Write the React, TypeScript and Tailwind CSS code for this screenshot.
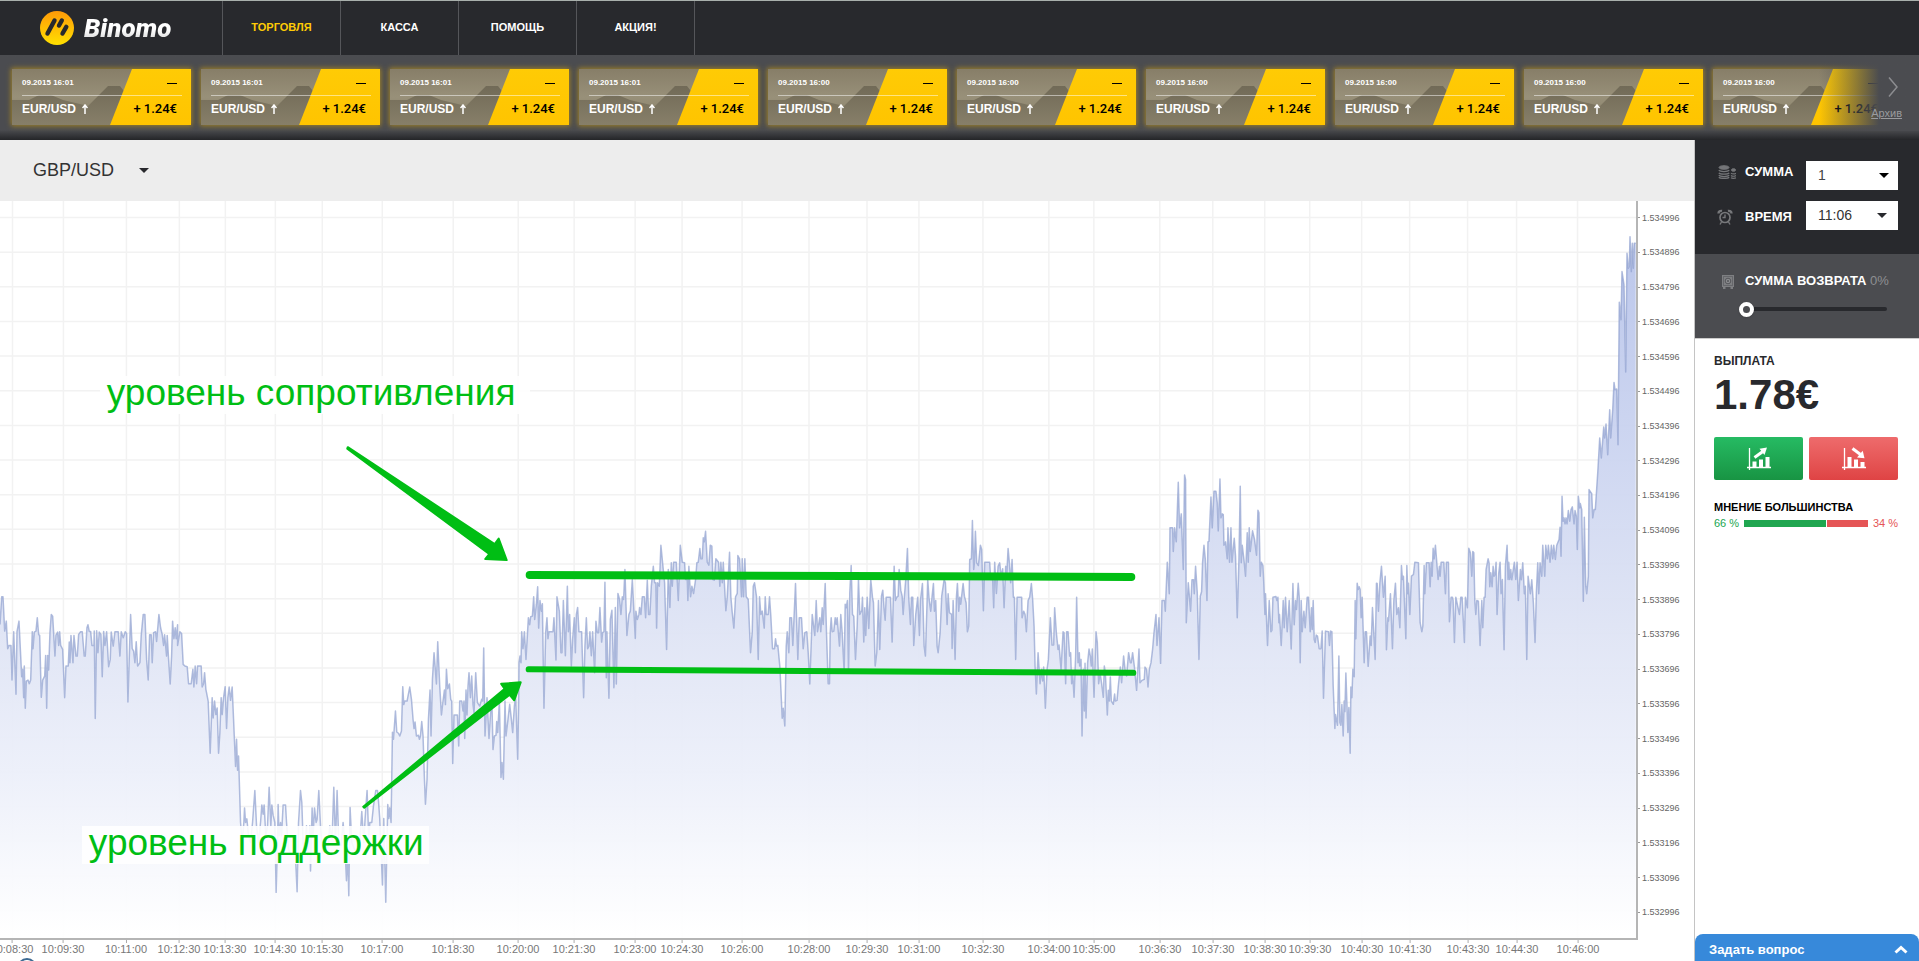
import { useState } from "react";
import type { ReactNode } from "react";

type Chunk = {
  left: number;
  top: number;
  points: string;
};

const PLOT_WIDTH = 1637;
const PLOT_HEIGHT = 738;

// quotes history, three samples per plot unit
const chunks: Chunk[] = [
  {
    left: 0,
    top: 359,
    points:
      "0,195 5,112 9,112 14,215 19,185 23,268 27,258 33,258 36,362 41,217 48,405 51,217 57,185 65,352 68,330 71,415 73,320 76,447 79,365 84,362 88,373 92,362 97,217 99,268 103,218 108,215 112,175 116,226 119,228 124,414 128,362 134,350 137,288 140,447 143,288 146,332 150,218 154,165 158,170 165,290 168,227 173,218 176,258 179,217 182,258 188,270 194,415 198,320 205,320 208,248 210,310 213,228 219,310 222,228 228,290 232,290 236,225 242,217 247,217 253,290 256,290 261,205 264,196 268,216 272,216 276,258 282,258 283,215 286,478 290,214 294,280 298,218 303,225 307,352 311,216 315,258 320,217 326,322 331,300 334,218 340,260 345,217 355,217 360,290 364,217 370,235 376,217 380,222 384,428 388,300 392,165 397,268 401,275 405,310 409,247 413,320 420,310 424,228 430,165 435,165 440,300 445,362 449,226 454,226 457,310 461,220 467,217 470,246 477,165 482,205 487,225 491,258 494,226 500,290 502,228 506,300 511,374 515,290 518,185 522,238 526,205 529,238 533,196 533,258 540,217 545,222 550,315 555,320 562,322 566,373 574,373 579,330 582,383 586,320 590,373 593,320 604,320 607,383 611,373 614,340 618,390 625,425 631,582 637,415 640,476 644,425 648,466 652,446 656,582 660,520 664,415 667,466 671,415 676,382 680,508 684,415 688,383 692,423 697,383 701,480 707,622 710,540 713,633 716,590 719,690 722,790 727,850 732,790 734,746 737,790 741,779 746,830 752,850 758,790 765,694 770,800 776,850 782,790 786,737 790,765 793,737 798,830 803,800 808,684 813,800 816,737 820,768 825,790 829,1000 833,850 835,736 838,830 842,790 845,830 850,737 857,737 860,790 866,870 874,885 880,880 886,870 892,998 896,790 902,694 906,730 910,850 914,880 920,800 924,890 930,800 932,936 937,746 940,830 944,746 949,790 952,780 957,694 962,800 968,880 976,840 984,870 990,800 997,840 1002,684 1007,850 1012,694 1017,850 1024,860 1030,790 1035,850 1040,965 1044,880 1047,1010 1051,745 1056,850 1064,870 1074,880 1080,850 1086,757 1092,850 1096,780 1102,694 1107,840 1110,790 1116,790 1121,740 1128,694 1133,694 1136,725 1140,780 1148,978 1152,778 1158,1030 1164,736 1167,778 1170,746 1174,790 1178,519 1181,540 1187,455 1191,518 1196,522 1200,530 1205,515 1209,382 1212,436 1215,425 1222,425 1230,383 1235,420 1240,480 1243,508 1246,488 1250,530 1256,528 1259,540",
  },
  {
    left: 400,
    top: 319,
    points:
      "62,650 66,607 70,650 74,780 77,855 82,780 86,600 91,512 94,650 98,480 103,400 107,455 110,494 114,367 120,500 125,587 130,545 134,512 137,556 140,450 144,508 149,494 153,540 156,545 159,733 163,587 173,587 177,680 180,545 186,545 190,575 193,545 195,658 199,512 202,587 205,500 208,460 212,535 216,470 220,555 223,580 228,460 233,550 240,560 246,540 249,545 252,386 256,650 262,535 268,658 274,560 277,560 280,691 284,650 289,648 291,607 294,640 299,545 304,775 307,730 311,780 316,545 319,650 325,600 330,555 335,600 339,640 344,560 348,530 354,720 357,545 358,430 361,410 364,430 366,337 370,388 374,337 379,420 386,295 390,316 393,292 398,290 402,232 405,300 410,255 414,202 417,326 421,243 425,275 428,253 433,567 438,340 442,295 445,358 448,337 460,337 463,295 469,422 472,232 479,275 484,400 487,400 491,243 497,409 503,200 506,337 510,285 515,440 519,358 524,295 527,400 530,285 534,264 538,337 546,337 552,535 556,380 560,295 564,388 568,380 571,337 575,409 579,337 585,460 589,305 593,340 597,340 601,264 606,368 609,340 613,337 616,188 620,475 622,337 628,537 632,300 637,272 643,505 647,264 650,494 655,222 660,240 664,285 668,232 672,240 676,150 682,348 688,285 692,275 698,180 703,275 707,357 709,275 713,300 718,285 720,264 724,285 728,232 734,232 738,295 743,182 747,285 751,285 755,200 761,140 765,190 769,190 771,326 774,190 779,200 784,77 789,130 795,190 801,390 806,150 811,264 815,130 818,200 822,128 830,128 836,243 842,77 848,128 855,130 858,180 863,180 865,243 868,140 873,232 877,200 882,222 888,180 892,130 896,128 901,87 904,118 908,118 911,55 914,67 918,35 923,128 928,137 932,77 937,80 940,180 944,182 949,118 957,128 961,200 964,128 968,190 971,128 975,200 979,274 983,232 990,98 994,232 998,280 1003,326 1008,232 1013,222 1015,108 1020,118 1026,232 1028,118 1032,232 1036,118 1040,232 1046,240 1053,400 1058,337 1061,200 1065,190 1071,232 1076,420 1080,232 1084,285 1088,275 1094,326 1097,232 1100,285 1106,285 1110,232 1114,290 1119,388 1125,388 1128,358 1131,380 1135,378 1141,440 1148,597 1151,567 1156,620 1160,380 1163,337 1168,400 1171,295 1176,295 1180,378 1188,192 1195,420 1199,295 1206,295 1211,388 1216,340 1222,337 1226,400 1231,494 1238,285 1246,348 1250,243 1254,337",
  },
  {
    left: 800,
    top: 299,
    points:
      "54,397 61,355 64,397 68,325 71,375 77,252 81,400 86,553 90,553 92,400 95,355 98,397 103,395 107,355 110,375 113,355 120,440 124,345 128,400 134,520 137,314 140,325 144,303 147,520 151,280 155,198 159,345 163,350 168,480 173,380 177,240 181,345 187,333 189,293 193,428 196,325 199,408 203,293 208,387 214,240 219,293 222,310 227,500 232,460 237,303 241,450 246,290 250,272 254,330 257,362 260,293 273,293 278,428 284,200 288,303 292,293 296,290 299,210 304,272 308,290 311,345 314,300 319,240 324,147 328,293 333,375 336,293 340,293 343,438 349,345 355,293 360,408 363,303 369,252 374,440 378,470 385,240 389,300 394,335 398,290 402,252 405,335 409,303 413,440 416,460 422,400 427,290 434,240 438,250 443,375 446,283 450,340 457,345 458,447 461,303 467,480 471,293 474,252 478,335 481,293 484,314 491,252 495,290 500,310 504,397 508,380 511,180 516,178 519,63 523,210 525,190 528,95 532,190 537,198 543,137 547,150 552,334 556,188 571,188 574,240 580,240 583,325 586,188 591,282 596,200 601,190 605,230 610,208 614,325 619,200 622,230 626,147 630,190 634,250 638,180 642,293 645,293 649,480 653,293 667,293 668,355 673,335 677,345 681,397 686,303 691,293 696,252 700,300 704,380 707,500 711,584 716,460 722,553 727,510 730,545 733,503 738,627 743,510 747,480 753,355 758,437 763,437 766,325 771,400 776,450 779,437 785,510 791,397 794,400 799,553 802,397 806,397 811,470 814,460 817,553 820,520 824,594 829,470 832,293 836,490 840,460 841,500 845,480 848,710 852,510 855,635 857,492 860,656 865,490 869,449 873,470 876,500 879,449 884,594 890,397 894,430 898,553 902,520 907,553 912,594 915,500 918,520 924,647 927,573 930,605 933,533 936,605 942,615 946,584 948,605 953,603 957,560 963,503 967,550 973,470 977,510 982,530 988,460 993,490 996,490 1000,460 1005,500 1012,573 1019,449 1022,550 1028,543 1035,540 1037,503 1042,510 1046,563 1050,510 1055,490 1060,450 1064,400 1070,345 1073,438 1079,355 1084,492",
  },
  {
    left: 1140,
    top: 259,
    points:
      "68,423 76,423 78,455 84,308 90,403 92,205 100,205 102,276 106,205 111,247 117,68 121,205 126,163 132,330 136,46 139,60 141,490 147,370 154,455 158,361 163,361 165,403 169,320 174,400 179,600 183,410 187,397 190,310 194,257 198,298 203,423 206,247 209,245 215,112 219,205 224,95 230,95 234,130 237,214 242,58 245,175 249,163 252,165 254,257 259,247 264,298 266,205 271,308 275,205 278,308 285,236 289,290 294,475 299,300 303,80 306,310 309,257 314,300 319,350 324,220 327,308 330,205 333,276 340,214 346,240 352,287 356,152 359,160 363,350 366,308 371,318 374,380 377,465 379,403 385,558 390,423 395,517 398,513 401,413 410,411 413,423 416,413 419,490 421,465 426,558 432,423 435,505 439,413 444,517 450,423 456,569 461,372 465,496 469,423 472,450 477,371 480,413 483,610 486,423 489,517 494,455 498,505 504,413 508,413 513,517 517,445 519,510 522,423 525,540 528,549 531,527 535,530 540,568 545,568 549,515 553,717 559,515 568,517 571,558 574,515 578,517 582,680 587,808 589,766 595,798 599,590 602,790 605,798 608,736 612,830 615,725 617,757 620,641 626,820 629,745 633,882 635,683 638,715 641,630 645,652 648,423 650,538 654,371 657,390 660,382 663,390 666,475 669,413 675,610 678,517 682,517 687,621 693,530 696,558 700,444 708,600 712,371 714,372 718,455 722,370 727,320 733,413 738,350 742,571 746,475 748,485 754,403 760,568 764,423 769,371 773,465 778,445 782,505 787,318 790,360 793,350 800,538 803,318 806,403 808,371 812,465 817,350 823,345 827,308 838,310 843,490 848,517 851,500 855,318 857,403 862,310 870,310 873,382 876,308 879,350 882,266 885,298 889,257 897,360 901,320 903,350 906,308 914,308 919,403 922,308 928,308 931,487 936,413 940,413 942,423 946,549 950,413 961,465 965,413 969,413 976,549 979,413 985,445 989,266 994,280 998,350 1001,276 1004,280 1007,423 1010,465 1013,423 1018,425 1023,558 1028,423 1031,505 1035,413 1038,413 1041,330 1047,298 1050,310 1052,382 1055,340 1059,382 1062,320 1065,350 1068,345 1071,308 1074,465 1079,340 1083,308 1086,403 1090,360 1095,571 1099,320 1104,257 1107,360 1109,308 1112,360 1115,330 1118,361 1126,308 1130,360 1134,308 1138,423 1144,330 1147,361 1151,310 1156,403 1159,380 1163,600 1167,350 1174,403 1178,361 1183,430 1188,549 1192,400 1196,310 1199,403 1203,310 1208,350 1211,257 1217,350 1220,257 1225,298 1228,257 1233,308 1237,257 1241,298 1244,257 1249,300 1253,257",
  },
  {
    left: 1500,
    top: 9,
    points:
      "176,1000 180,990 183,953 186,1040 189,860 192,935 195,925 198,943 201,925 204,943 208,903 212,935 216,900 220,892 225,943 228,903 232,920 235,1020 238,860 242,895 244,882 248,900 253,1175 256,923 260,1130 263,1153 268,1100 270,840 278,852 281,925 285,900 289,900 296,790 302,685 307,745 314,652 317,685 321,643 326,735 332,600 335,685 341,600 345,518 348,540 353,538 357,705 361,277 366,330 369,185 375,225 380,487 384,130 388,175 391,170 393,80 397,185 400,100 403,175 406,100 410,100",
  },
];

const line =
  "M" +
  chunks
    .flatMap(({ left, top, points }) =>
      points.split(" ").map((point) => {
        const [x, y] = point.split(",").map(Number);
        return `${(left + x / 3).toFixed(1)} ${(top + y / 3).toFixed(1)}`;
      })
    )
    .join("L");

const timeTicks: [number, string][] = [
  [12, "10:08:30"],
  [63, "10:09:30"],
  [126, "10:11:00"],
  [179, "10:12:30"],
  [225, "10:13:30"],
  [275, "10:14:30"],
  [322, "10:15:30"],
  [382, "10:17:00"],
  [453, "10:18:30"],
  [518, "10:20:00"],
  [574, "10:21:30"],
  [635, "10:23:00"],
  [682, "10:24:30"],
  [742, "10:26:00"],
  [809, "10:28:00"],
  [867, "10:29:30"],
  [919, "10:31:00"],
  [983, "10:32:30"],
  [1049, "10:34:00"],
  [1094, "10:35:00"],
  [1160, "10:36:30"],
  [1213, "10:37:30"],
  [1265, "10:38:30"],
  [1310, "10:39:30"],
  [1362, "10:40:30"],
  [1410, "10:41:30"],
  [1468, "10:43:30"],
  [1517, "10:44:30"],
  [1578, "10:46:00"],
];

const priceTicks = Array.from({ length: 21 }, (_, i) => ({
  y: 16.5 + i * 34.7,
  label: (1.534996 - i * 0.0001).toFixed(6),
}));

const deals = Array.from({ length: 10 }, (_, i) => ({
  date: i < 4 ? "09.2015 16:01" : "09.2015 16:00",
  pair: "EUR/USD",
  profit: "+ 1.24€",
}));

const navItems = ["ТОРГОВЛЯ", "КАССА", "ПОМОЩЬ", "АКЦИЯ!"];

function Logo() {
  return (
    <a href="#" className="flex w-[223px] items-center gap-[10px] border-r border-[#55565a] pl-10">
      <svg viewBox="0 0 34 34" className="h-[34px] w-[34px]" aria-hidden="true">
        <defs>
          <linearGradient id="coin" x1="0" y1="0" x2="0" y2="1">
            <stop offset="0" stopColor="#ff9a08" />
            <stop offset="1" stopColor="#ffe000" />
          </linearGradient>
        </defs>
        <circle cx="17" cy="17" r="17" fill="url(#coin)" />
        <g stroke="#28292d" strokeLinecap="round" strokeWidth="4.4">
          <path d="M7.500 22.500 14.500 9.500" />
          <path d="M19 14.500 21.800 9.500" />
          <path d="M22.500 22.500 26.300 15.800" />
        </g>
      </svg>
      <span className="bg-gradient-to-b from-white from-55% to-[#c8c8c8] bg-clip-text pr-1 font-['Roboto','Liberation_Sans',sans-serif] text-[26px] leading-8 font-black text-transparent italic">
        Binomo
      </span>
    </a>
  );
}

function DealCard({ date, pair, profit }: { date: string; pair: string; profit: string }) {
  return (
    <div className="relative h-14 w-[179px] shrink-0 bg-gradient-to-b from-[#877e68] via-[#989079] to-[#857d66] shadow-[0_0_5px_1px_#a08227]">
      <svg viewBox="0 0 179 56" className="absolute inset-0 h-full w-full" aria-hidden="true">
        <defs>
          <linearGradient id="hill" x1="0" y1="0" x2="0" y2="1">
            <stop offset="0" stopColor="#716a57" />
            <stop offset="1" stopColor="#877f69" />
          </linearGradient>
          <linearGradient id="gold" x1="0" y1="0" x2="0" y2="1">
            <stop offset="0" stopColor="#ffcb05" />
            <stop offset="1" stopColor="#ffc400" />
          </linearGradient>
        </defs>
        <path d="M0 31h17l10-5h12l12 5 25 6 14-14 6-6h12l14 18v21H0z" fill="url(#hill)" />
        <path d="M120 0h59v56H98z" fill="url(#gold)" />
        <path d="M10 26.500h160" stroke="#fff" strokeOpacity=".5" />
      </svg>
      <div className="relative flex h-full flex-col justify-between pt-2 pr-[14px] pb-2 pl-[10px]">
        <div className="flex items-center justify-between text-[8px] leading-3 font-bold">
          <span className="text-white">{date}</span>
          <span className="h-px w-[10px] bg-black" />
        </div>
        <div className="flex items-center justify-between leading-4">
          <span className="flex items-center gap-[6px] text-[12px] font-bold text-white">
            {pair}
            <svg viewBox="0 0 6 10" className="h-[10px] w-[6px]" aria-hidden="true">
              <path d="M3 10V2M.5 4 3 1l2.500 3" fill="none" stroke="#fff" strokeWidth="1.500" />
            </svg>
          </span>
          <span className="font-['Roboto','Liberation_Sans',sans-serif] text-[13px] font-medium text-black">{profit}</span>
        </div>
      </div>
    </div>
  );
}

function Caret({ className }: { className: string }) {
  return (
    <svg viewBox="0 0 10 5" className={`pointer-events-none absolute h-[5px] w-[10px] ${className}`} aria-hidden="true">
      <path d="M0 0h10L5 5z" fill="currentColor" />
    </svg>
  );
}

function CoinsIcon() {
  return (
    <svg viewBox="0 0 18 14" className="h-[14px] w-[18px]" fill="none" stroke="#747578" aria-hidden="true">
      <ellipse cx="6" cy="2.500" rx="5" ry="1.800" fill="#747578" />
      <path d="M.8 5.200c1.500 1.800 8.900 1.800 10.400 0M.8 7.800c1.500 1.800 8.900 1.800 10.400 0M.8 10.200c1.500 1.800 8.900 1.800 10.400 0M.8 12.200c1.500 1.600 8.900 1.600 10.400 0" strokeWidth="1.300" />
      <ellipse cx="15.500" cy="5" rx="2" ry="1.300" fill="#747578" />
      <path d="M13 8.200c1 1 4 1 5 0M13 10.500c1 1 4 1 5 0M13 12.700c1 .8 4 .8 5 0" strokeWidth="1.200" />
    </svg>
  );
}

function ClockIcon() {
  return (
    <svg viewBox="0 0 16 16" className="h-4 w-4" fill="none" stroke="#77787b" strokeWidth="1.700" aria-hidden="true">
      <circle cx="8" cy="8.500" r="5" />
      <path d="M8 5.500v3H5.500M4.500 13 3 15.500M11.500 13l1.500 2.500" strokeWidth="1.400" />
      <path d="M1.500 4.500c0-2 1.800-3 3.500-2.500M14.500 4.500c0-2-1.800-3-3.500-2.500" strokeWidth="2.400" />
    </svg>
  );
}

function SafeIcon() {
  return (
    <svg viewBox="0 0 14 15" className="h-[15px] w-[14px]" aria-hidden="true">
      <path d="M1 1h12v12h-1v2H9.500v-2h-5v2H2v-2H1z" fill="#7e7f82" />
      <rect x="2.500" y="2.500" width="9" height="9" fill="none" stroke="#66676b" />
      <circle cx="7" cy="7" r="2.800" fill="#8a8b8e" stroke="#55565a" />
      <circle cx="7" cy="7" r="1" fill="#55565a" />
    </svg>
  );
}

function UpIcon() {
  return (
    <svg viewBox="0 0 24 24" className="h-6 w-6" fill="none" stroke="#fff" aria-hidden="true">
      <path d="M2.500 1v22M0 20.500h24" strokeWidth="1.300" />
      <path d="M5.500 14.500h4V20h-4zM12 12.500h4V20h-4zM18.500 10h4v10h-4z" fill="#fff" stroke="none" />
      <path d="m7.500 10.500 8-5.800" strokeWidth="3" />
      <path d="m12.500 1.800 7.500-1.300-2.500 7.500z" fill="#fff" stroke="none" />
    </svg>
  );
}

function DownIcon() {
  return (
    <svg viewBox="0 0 24 24" className="h-6 w-6" fill="none" stroke="#fff" aria-hidden="true">
      <path d="M2.500 1v22M0 20.500h24" strokeWidth="1.300" />
      <path d="M5.500 10h4v10h-4zM12 12.500h4V20h-4zM18.500 15h4v5h-4z" fill="#fff" stroke="none" />
      <path d="m10.500 1.500 8 6" strokeWidth="3" />
      <path d="m15 10.500 7.500.8-1.800-7.500z" fill="#fff" stroke="none" />
    </svg>
  );
}

function Note({ className, children }: { className: string; children: ReactNode }) {
  return (
    <div className={`absolute h-[38px] bg-white/90 pl-[7px] text-[37px] leading-[34px] whitespace-nowrap text-[#00be14] ${className}`}>
      {children}
    </div>
  );
}

function Chart() {
  return (
    <section className="flex grow flex-col overflow-hidden">
      <div className="flex grow">
        <div className="relative grow border-r-2 border-b-2 border-[#b5b5b5]">
          <svg
            viewBox={`0 0 ${PLOT_WIDTH} ${PLOT_HEIGHT}`}
            preserveAspectRatio="none"
            className="absolute inset-0 h-full w-full"
            role="img"
            aria-label="GBP/USD"
          >
            <defs>
              <linearGradient id="area" gradientUnits="userSpaceOnUse" x1="0" y1="35" x2="0" y2="735">
                <stop offset="0" stopColor="#b8c4ea" />
                <stop offset=".3" stopColor="#cbd4f0" />
                <stop offset=".58" stopColor="#e0e5f5" />
                <stop offset=".78" stopColor="#edf0fa" />
                <stop offset="1" stopColor="#ffffff" />
              </linearGradient>
            </defs>
            <g stroke="#f2f2f2" strokeWidth="1.500">
              {timeTicks.map(([x, label]) => (
                <line key={label} x1={x + 0.5} x2={x + 0.5} y1="0" y2={PLOT_HEIGHT} />
              ))}
              {priceTicks.map(({ y, label }) => (
                <line key={label} x1="0" x2={PLOT_WIDTH} y1={y} y2={y} />
              ))}
            </g>
            <path d={`${line}V${PLOT_HEIGHT}H0Z`} fill="url(#area)" fillOpacity=".95" />
            <path d={line} fill="none" stroke="#8f9fce" strokeOpacity=".7" strokeWidth="1.500" strokeLinejoin="round" />
          </svg>

          <Note className="top-[23.800%] left-[6.100%] w-[430px]">уровень сопротивления</Note>
          <Note className="top-[84.800%] left-[5%] w-[347px]">уровень поддержки</Note>

          {/* support and resistance marks */}
          <svg
            viewBox={`0 0 ${PLOT_WIDTH} ${PLOT_HEIGHT}`}
            preserveAspectRatio="none"
            className="absolute inset-0 h-full w-full"
            aria-hidden="true"
          >
            <g stroke="#00be14" strokeLinecap="round">
              <path d="M530 374.500 1132 376.500" strokeWidth="8" />
              <path d="M529 469 1134 472.500" strokeWidth="6" />
            </g>
            <g fill="#00be14" stroke="#00be14" strokeLinejoin="round" strokeWidth="2">
              <path d="M348 246.500 495 343.500 499 338 507 359.500 485.500 358.500 489.500 353.500 347.500 248z" />
              <path d="M363.500 606.500 505 488.500 501.500 483.500 521 482 514.500 500 510 494.500 364.500 607.500z" />
            </g>
          </svg>
        </div>

        <div className="relative w-[56px]">
          {priceTicks.map(({ y, label }) => (
            <div
              key={label}
              className="absolute left-0 flex -translate-y-1/2 items-center gap-[2px] text-[9px] leading-[10px] text-[#666]"
              style={{ top: `${(y / PLOT_HEIGHT) * 100}%` }}
            >
              <span className="h-px w-[2px] bg-[#999]" />
              {label}
            </div>
          ))}
        </div>
      </div>

      <div className="relative mr-[57px] h-[21px] shrink-0">
        {timeTicks.map(([x, label]) => (
          <div
            key={label}
            className="absolute top-0 flex -translate-x-1/2 flex-col items-center text-[11px] leading-3 text-[#777]"
            style={{ left: `${(x / PLOT_WIDTH) * 100}%` }}
          >
            <span className="h-[3px] w-px bg-[#aaa]" />
            {label}
          </div>
        ))}
        <span className="absolute top-[18px] left-[17px] h-5 w-5 rounded-full border-2 border-[#3d6a92] bg-white" />
      </div>
    </section>
  );
}

function TradePanel() {
  const [refund, setRefund] = useState(0);

  return (
    <aside className="flex w-[225px] shrink-0 flex-col border-l border-[#c4c4c4]">
      <div className="flex justify-between bg-[#28292d] pt-[21px] pr-[21px] pb-6">
        <div className="flex flex-col gap-[27px] pt-[2px] text-[13px] leading-[18px] font-bold text-white">
          <label htmlFor="amount" className="flex items-center">
            <span className="flex w-[50px] shrink-0 justify-center pl-[13px]">
              <CoinsIcon />
            </span>
            СУММА
          </label>
          <label htmlFor="time" className="flex items-center">
            <span className="flex w-[50px] shrink-0 justify-center pl-[9px]">
              <ClockIcon />
            </span>
            ВРЕМЯ
          </label>
        </div>
        <div className="flex flex-col gap-[11px]">
          <div className="relative">
            <select id="amount" className="block h-[29px] w-[92px] appearance-none bg-white pl-3 text-[14px] text-[#444]">
              <option>1</option>
            </select>
            <Caret className="top-3 right-[9px] text-black" />
          </div>
          <div className="relative">
            <select id="time" className="block h-[29px] w-[92px] appearance-none bg-white pl-3 text-[14px] text-[#333]">
              <option>11:06</option>
            </select>
            <Caret className="top-3 right-[11px] text-[#28292d]" />
          </div>
        </div>
      </div>

      <div className="h-[84px] bg-[#4b4c50] pt-[18px]">
        <div className="flex items-center leading-[18px]">
          <span className="flex w-[50px] shrink-0 justify-center pl-4">
            <SafeIcon />
          </span>
          <label htmlFor="refund" className="text-[13px] font-bold whitespace-nowrap text-white">
            СУММА ВОЗВРАТА <span className="font-normal text-[#8e8f92]">{refund}%</span>
          </label>
        </div>
        <input
          id="refund"
          type="range"
          min={0}
          max={100}
          value={refund}
          onChange={(e) => setRefund(Number(e.target.value))}
          className="mt-[11px] ml-11 block h-4 w-[148px] appearance-none bg-transparent [&::-webkit-slider-runnable-track]:h-1 [&::-webkit-slider-runnable-track]:rounded-full [&::-webkit-slider-runnable-track]:bg-[#28292d] [&::-webkit-slider-thumb]:-mt-[5px] [&::-webkit-slider-thumb]:h-[15px] [&::-webkit-slider-thumb]:w-[15px] [&::-webkit-slider-thumb]:appearance-none [&::-webkit-slider-thumb]:rounded-full [&::-webkit-slider-thumb]:border-4 [&::-webkit-slider-thumb]:border-white [&::-webkit-slider-thumb]:bg-[#4b4c50] [&::-webkit-slider-thumb]:shadow"
        />
      </div>

      <div className="flex grow flex-col border-t border-[#ccc] bg-white pt-[14px] pr-[21px] pl-[19px]">
        <h2 className="text-[12px] leading-4 font-bold text-[#28292d]">ВЫПЛАТА</h2>
        <p className="mt-px text-[42px] leading-[50px] font-bold text-[#28292d]">1.78€</p>
        <div className="mt-[17px] flex gap-[6px]">
          <button aria-label="Вверх" className="flex h-[43px] grow items-center justify-center rounded-xs bg-gradient-to-b from-[#26bb63] to-[#189443]">
            <UpIcon />
          </button>
          <button aria-label="Вниз" className="flex h-[43px] grow items-center justify-center rounded-xs bg-gradient-to-b from-[#ee6b6c] to-[#df4344]">
            <DownIcon />
          </button>
        </div>
        <h3 className="mt-5 text-[11px] leading-[14px] font-bold whitespace-nowrap text-black">МНЕНИЕ БОЛЬШИНСТВА</h3>
        <div className="mt-[2px] flex items-center text-[11px] leading-[14px]">
          <span className="w-[30px] text-[#20a650]">66 %</span>
          <span className="flex h-[7px] grow gap-px">
            <span className="w-2/3 bg-[#20a650]" />
            <span className="w-1/3 bg-[#e55556]" />
          </span>
          <span className="w-[30px] text-right text-[#e55556]">34 %</span>
        </div>
        <button className="mt-auto -mr-[21px] -ml-[19px] flex h-[27px] items-center justify-between rounded-t-lg bg-[#3789da] pt-1 pr-[11px] pl-[14px] text-[13px] font-bold text-white">
          Задать вопрос
          <svg viewBox="0 0 14 9" className="h-[9px] w-[14px]" aria-hidden="true">
            <path d="m1.500 7.500 5.500-5 5.500 5" fill="none" stroke="#fff" strokeWidth="3" />
          </svg>
        </button>
      </div>
    </aside>
  );
}

export default function App() {
  return (
    <div className="flex min-h-screen flex-col bg-white font-['Liberation_Sans',Arial,sans-serif]">
      <header className="flex h-[55px] shrink-0 border-t border-[#a9b0ac] bg-[#28292d]">
        <Logo />
        <nav className="flex">
          {navItems.map((item, i) => (
            <a
              key={item}
              href="#"
              className={`flex w-[118px] items-center justify-center border-r border-[#55565a] pb-[2px] text-[11px] font-bold ${
                i === 0 ? "text-[#ffcb05]" : "text-white"
              }`}
            >
              {item}
            </a>
          ))}
        </nav>
      </header>

      <div className="relative h-[85px] shrink-0 overflow-hidden bg-linear-to-b from-[#4b4c50] from-88% to-[#242528]">
        <div className="flex gap-[10px] pt-[14px] pl-3">
          {deals.map((deal, i) => (
            <DealCard key={i} {...deal} />
          ))}
        </div>
        <div className="absolute top-0 right-0 flex h-[76px] w-[100px] flex-col items-end gap-[10px] bg-linear-to-r from-transparent to-[#4b4c50] to-60% pt-[22px] pr-[17px]">
          <button aria-label="Вперёд" className="pr-1">
            <svg viewBox="0 0 10 20" className="block h-5 w-[10px]" aria-hidden="true">
              <path d="m1 .5 8 9.500-8 9.500" fill="none" stroke="#8c8d90" strokeWidth="1.500" />
            </svg>
          </button>
          <a href="#" className="text-[11px] leading-3 text-[#9a9b9e] underline">
            Архив
          </a>
        </div>
      </div>

      <div className="flex grow">
        <main className="flex min-w-0 grow flex-col">
          <div className="h-[61px] shrink-0 bg-[#ededed] pt-[14px] pl-[33px]">
            <div className="relative w-[120px]">
              <select aria-label="GBP/USD" className="h-8 w-full appearance-none bg-transparent text-[18px] text-[#333]">
                <option>GBP/USD</option>
              </select>
              <Caret className="top-[14px] right-[4px] text-[#28292d]" />
            </div>
          </div>
          <Chart />
        </main>
        <TradePanel />
      </div>
    </div>
  );
}
